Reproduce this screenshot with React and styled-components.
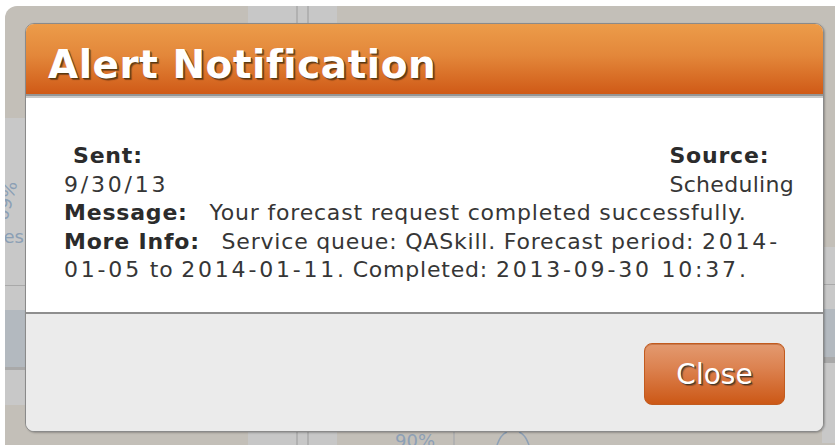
import React from 'react';
import styled, { createGlobalStyle } from 'styled-components';

const GlobalStyle = createGlobalStyle`
  html, body {
    margin: 0;
    padding: 0;
    background: #ffffff;
  }
  body {
    font-family: "DejaVu Sans", Verdana, sans-serif;
  }
`;

// faded dashboard sitting behind the modal
const Frame = styled.div`
  position: relative;
  margin: 6px 0 0 5px;
  width: 830px;
  height: 439px;
  background: #c3bfb8;
  border-top-left-radius: 12px;
  overflow: hidden;
`;

const Dashboard = styled.div`
  display: flex;
  height: 100%;
`;

const SideColumn = styled.div`
  width: 243px;
  display: flex;
  flex-direction: column;
`;

const Spacer = styled.div`
  height: ${(p) => p.$h}px;
  flex-shrink: 0;
`;

const Tile = styled.div`
  position: relative;
  height: ${(p) => p.$h}px;
  flex-shrink: 0;
  background: ${(p) => (p.$blue ? '#b3b9bf' : '#c8c8c8')};
  border-bottom: ${(p) => p.$edge || 0}px solid #a9a9a9;
  font-size: 18px;
  color: #8b9fb5;
`;

const TileLabel = styled.span`
  position: absolute;
  right: ${(p) => p.$right}px;
  top: ${(p) => p.$top}px;
  transform: rotate(${(p) => p.$rot || 0}deg);
  white-space: nowrap;
`;

const MidColumn = styled.div`
  width: 89px;
  background: #c7c7c7;
  display: flex;
`;

const Rule = styled.div`
  width: ${(p) => p.$w}px;
  flex-shrink: 0;
  border-right: 2px solid #b1b1b1;
`;

const OpenArea = styled.div`
  flex: 1;
  display: flex;
  flex-direction: column;
  justify-content: flex-end;
`;

const GaugeRow = styled.div`
  display: flex;
  align-items: flex-start;
  height: 13px;
  overflow: hidden;
  padding-left: 58px;
  color: #8da0b6;
  font-size: 18px;
  line-height: 18px;
`;

const GaugeDivider = styled.div`
  width: 2px;
  height: 13px;
  background: #b1b1b1;
  margin: 0 0 0 18px;
`;

const RightColumn = styled.div`
  width: 13px;
  display: flex;
  flex-direction: column;
`;

// modal window
const Dialog = styled.div`
  position: absolute;
  left: 20px;
  top: 17px;
  width: 799px;
  height: 409px;
  box-sizing: border-box;
  border: 1px solid #8a8a8a;
  border-radius: 9px;
  background: #ebebeb;
  box-shadow: 1px 1px 2px rgba(0, 0, 0, 0.25);
  overflow: hidden;
  display: flex;
  flex-direction: column;
`;

const Header = styled.div`
  height: 72px;
  flex-shrink: 0;
  box-sizing: border-box;
  padding: 21px 0 0 22px;
  background: linear-gradient(#ec9c4a, #e3873a 45%, #d05a17);
  border-bottom: 2px solid #959595;
`;

const Title = styled.h1`
  margin: 0;
  font-size: 39px;
  line-height: 1;
  letter-spacing: 0.5px;
  font-weight: bold;
  color: #ffffff;
  text-shadow: 1px 1px 0 #5a3a10, 2px 2px 1px rgba(0, 0, 0, 0.4);
`;

const Body = styled.div`
  height: 218px;
  flex-shrink: 0;
  box-sizing: border-box;
  padding: 44px 29px 0 38px;
  background: #ffffff;
  border-top: 2px solid #c9c9c9;
  border-bottom: 2px solid #8e8e8e;
  font-size: 22px;
  line-height: 28.5px;
  letter-spacing: 0.8px;
  color: #363636;
`;

const MetaRow = styled.div`
  display: flex;
  justify-content: space-between;
`;

const Meta = styled.div`
  display: flex;
  flex-direction: column;
  letter-spacing: ${(p) => p.$tight ? '0.3px' : 'inherit'};
`;

const Label = styled.span`
  font-weight: bold;
  color: #2b2b2b;
  letter-spacing: 0.8px;
  padding-left: ${(p) => p.$indent || 0}px;
  margin-right: ${(p) => p.$gap || 0}px;
`;

// dates and times run a little wider than the words
const Num = styled.span`
  letter-spacing: 2.8px;
`;

const Line = styled.div``;

const Footer = styled.div`
  flex: 1;
  display: flex;
  justify-content: flex-end;
  padding: 29px 38px 0 0;
  background: #ebebeb;
`;

const CloseButton = styled.button`
  width: 141px;
  height: 62px;
  border: 1px solid #c25b1f;
  border-radius: 8px;
  background: linear-gradient(#e39a70, #dc8250 40%, #cc5816);
  box-shadow: inset 0 1px 0 #c97a4c;
  font-family: "DejaVu Sans", Verdana, sans-serif;
  font-size: 28px;
  color: #ffffff;
  text-shadow: 1px 1px 0 #4a3a2a, 2px 2px 1px rgba(0, 0, 0, 0.3);
  cursor: pointer;
  padding: 0;
`;

export default function App() {
  return (
    <>
      <GlobalStyle />
      <Frame>
        <Dashboard>
          <SideColumn>
            <Spacer $h={112} />
            <Tile $h={167} $edge={1}>
              <TileLabel $right={222} $top={72} $rot={-75}>09%</TileLabel>
              <TileLabel $right={224} $top={108}>Queues</TileLabel>
            </Tile>
            <Tile $h={24} />
            <Tile $h={57} $blue $edge={3} />
            <Tile $h={35} />
          </SideColumn>
          <MidColumn>
            <Rule $w={48} />
            <Rule $w={9} />
          </MidColumn>
          <OpenArea>
            <GaugeRow>
              90%
              <GaugeDivider />
              <svg width="40" height="13" viewBox="0 0 40 13" style={{ marginLeft: 38 }}>
                <path d="M4 13 Q8 2 14 0 M26 0 Q32 2 36 13" fill="none" stroke="#8da0b6" strokeWidth="1.5" />
              </svg>
            </GaugeRow>
          </OpenArea>
          <RightColumn>
            <Spacer $h={241} />
            <Tile $h={37} $edge={1} />
            <Tile $h={24} />
            <Tile $h={48} $blue $edge={6} />
            <Tile $h={80} />
          </RightColumn>
        </Dashboard>

        <Dialog>
          <Header>
            <Title>Alert Notification</Title>
          </Header>
          <Body>
            <MetaRow>
              <Meta>
                <Label $indent={9}>Sent:</Label>
                <Num>9/30/13</Num>
              </Meta>
              <Meta $tight>
                <Label>Source:</Label>
                <span>Scheduling</span>
              </Meta>
            </MetaRow>
            <Line>
              <Label $gap={14}>Message:</Label> Your forecast request completed successfully.
            </Line>
            <Line>
              <Label $gap={14}>More Info:</Label> Service queue: QASkill. Forecast period: <Num>2014-</Num><wbr /><Num>01-05</Num> to <Num>2014-01-11</Num>. Completed: <Num>2013-09-30 10:37</Num>.
            </Line>
          </Body>
          <Footer>
            <CloseButton>Close</CloseButton>
          </Footer>
        </Dialog>
      </Frame>
    </>
  );
}
